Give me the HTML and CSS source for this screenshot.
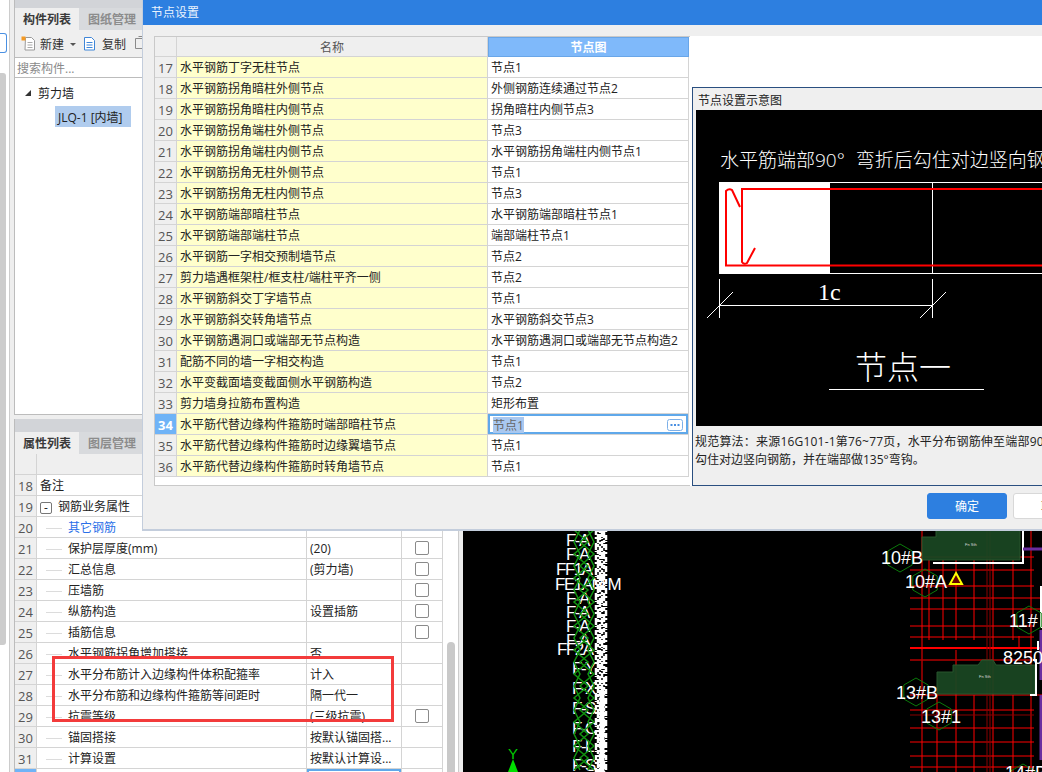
FILE: index.html
```html
<!DOCTYPE html>
<html lang="zh-CN">
<head>
<meta charset="utf-8">
<title>节点设置</title>
<link rel="stylesheet" href="styles.css">
</head>
<body>
<div class="app">
  <aside class="rail">
    <div class="rail-in">
      <div class="rail-tile"></div>
      <div class="rail-thumb"></div>
    </div>
  </aside>

  <div class="panels">
    <section class="panel panel-top">
      <div class="panel-head"></div>
      <div class="tabs">
        <span class="tab tab-on">构件列表</span>
        <span class="tab">图纸管理</span>
      </div>
      <div class="toolbar">
        <svg class="tool-ico" width="15" height="15" viewBox="0 0 15 15"><path d="M4.500 1.500h6l3 3v9.500h-9.500z" fill="#fff" stroke="#9a9a9a"/><path d="M6.500 6.500h5M6.500 9h5M6.500 11.500h5" stroke="#aaa"/><rect x="0.500" y="0.500" width="4" height="4" fill="#f59a23"/></svg>
        <span class="tool-label">新建</span>
        <span class="caret"></span>
        <svg class="tool-ico copy-ico" width="13" height="15" viewBox="0 0 13 15"><path d="M1.500 1.500h7l3 3v9.500h-10z" fill="#fff" stroke="#3f86d8"/><path d="M3.500 6.500h6M3.500 9h6M3.500 11.500h6" stroke="#3f86d8"/></svg>
        <span class="tool-label">复制</span>
        <svg class="tool-ico next-ico" width="12" height="15" viewBox="0 0 12 15"><path d="M0.500 2.500h9v10h-9z" fill="none" stroke="#8a8a8a"/><path d="M3.500 0.500h8v11" fill="none" stroke="#8a8a8a"/></svg>
      </div>
      <div class="search">搜索构件...</div>
      <div class="tree">
        <div class="tree-root"><span class="tree-tri"></span><span class="tree-name">剪力墙</span></div>
        <div class="tree-leaf">JLQ-1 [内墙]</div>
      </div>
    </section>

    <section class="panel panel-bottom">
      <div class="panel-head"></div>
      <div class="tabs">
        <span class="tab tab-on">属性列表</span>
        <span class="tab">图层管理</span>
      </div>
      <div class="prop-body">
        <table class="prop">
          <colgroup><col class="pc-no"><col class="pc-name"><col class="pc-val"><col class="pc-chk"></colgroup>
          <tr class="prop-head"><th></th><th></th><th></th><th></th></tr>
          <tr><th>18</th><td>备注</td><td></td><td></td></tr>
          <tr><th>19</th><td><span class="minus">-</span>钢筋业务属性</td><td></td><td></td></tr>
          <tr><th>20</th><td class="leaf link">其它钢筋</td><td></td><td></td></tr>
          <tr><th>21</th><td class="leaf">保护层厚度(mm)</td><td>(20)</td><td><span class="chk"></span></td></tr>
          <tr><th>22</th><td class="leaf">汇总信息</td><td>(剪力墙)</td><td><span class="chk"></span></td></tr>
          <tr><th>23</th><td class="leaf">压墙筋</td><td></td><td><span class="chk"></span></td></tr>
          <tr><th>24</th><td class="leaf">纵筋构造</td><td>设置插筋</td><td><span class="chk"></span></td></tr>
          <tr><th>25</th><td class="leaf">插筋信息</td><td></td><td><span class="chk"></span></td></tr>
          <tr><th>26</th><td class="leaf">水平钢筋拐角增加搭接</td><td>否</td><td></td></tr>
          <tr><th>27</th><td class="leaf">水平分布筋计入边缘构件体积配箍率</td><td>计入</td><td></td></tr>
          <tr><th>28</th><td class="leaf">水平分布筋和边缘构件箍筋等间距时</td><td>隔一代一</td><td></td></tr>
          <tr><th>29</th><td class="leaf">抗震等级</td><td>(三级抗震)</td><td><span class="chk"></span></td></tr>
          <tr><th>30</th><td class="leaf">锚固搭接</td><td>按默认锚固搭...</td><td></td></tr>
          <tr><th>31</th><td class="leaf">计算设置</td><td>按默认计算设...</td><td></td></tr>
          <tr class="row-cur"><th></th><td></td><td></td><td></td></tr>
        </table>
        <div class="lane"><div class="lane-thumb"></div></div>
      </div>
    </section>
  </div>

  <main class="cad">
    <svg class="cad-svg" width="579" height="772" viewBox="463 0 579 772">
      <defs>
        <polygon id="hex" points="0,-14 12.200,-7 12.200,7 0,14 -12.200,7 -12.200,-7" fill="none" stroke="#0b7a0b"/>
      </defs>

      <g class="noise">
        <line x1="596" y1="530" x2="596" y2="772" stroke-dasharray="5 2 2 4 7 1 1 3"/>
        <line x1="598" y1="530" x2="598" y2="772" stroke-dasharray="2 2 9 1 3 3 4 1"/>
        <line x1="600" y1="530" x2="600" y2="772" stroke-dasharray="3 1 6 2 2 2 9 1"/>
        <line x1="602" y1="530" x2="602" y2="772" stroke-dasharray="7 1 1 2 5 2 3 1"/>
        <line x1="604" y1="530" x2="604" y2="772" stroke-dasharray="8 2 3 1 4 3"/>
        <line x1="606" y1="530" x2="606" y2="772" stroke-dasharray="2 3 5 1 1 2 6 2"/>
        <line x1="602" y1="690" x2="602" y2="772" class="solid"/>
      </g>

      <g class="cad-label">
        <text x="566" y="546">F-A</text>
        <text x="566" y="560">F-A</text>
        <text x="556" y="575">FF1A</text>
        <text x="555" y="590">FE1AM M</text>
        <text x="566" y="604">F-A</text>
        <text x="566" y="618">F-A</text>
        <text x="566" y="632">F-A</text>
        <text x="566" y="646">F-A</text>
        <text x="557" y="655">FF2A</text>
        <text x="572" y="674">F-Y</text>
        <text x="572" y="694">F-X</text>
        <text x="572" y="714">F-S</text>
        <text x="572" y="734">F-C</text>
        <text x="572" y="752">F-L</text>
        <text x="572" y="771">F-S</text>
      </g>

      <g class="chain">
        <polyline points="580,530 574,542 580,554 574,566 580,578 574,590 580,602 574,614 580,626 574,638 580,650 574,662 580,674 574,686 580,698 574,710 580,722 574,734 580,746 574,758 580,770"/>
        <polyline points="588,530 594,542 588,554 594,566 588,578 594,590 588,602 594,614 588,626 594,638 588,650 594,662 588,674 594,686 588,698 594,710 588,722 594,734 588,746 594,758 588,770"/>
        <polyline points="574,530 588,542 574,554 588,566 574,578 588,590 574,602 588,614 574,626 588,638 574,650 588,662 574,674 588,686 574,698 588,710 574,722 588,734 574,746 588,758 574,770"/>
        <polyline points="594,530 580,542 594,554 580,566 594,578 580,590 594,602 580,614 594,626 580,638 594,650 580,662 594,674 580,686 594,698 580,710 594,722 580,734 594,746 580,758 594,770"/>
      </g>

      <g class="red">
        <path d="M910 557H1034M910 570H1034M910 586H1034M910 598H1042M910 609H1042M910 626H1034M910 637H1034M910 660H1034M910 695H1042M910 710H1034M910 728H1034M910 742H1034M910 756H1034M910 767H1034"/>
        <path d="M922 530V772M929 560V640M943 560V640M956 560V640M956 650V772M974 560V640M993 560V772M1013 560V640M1019 636V648M937 695V772M1031 530V772M974 695V772M1013 695V772"/>
        <path class="red-thick" d="M910 648H1042"/>
        <path class="red-dark" d="M910 660H1034M910 715H1034M987 530V772M990 530V772"/>
      </g>

      <path class="block" d="M922 537H936V530H1020V560H922Z"/>
      <path class="block" d="M937 672H953V665H975L978 665L982 660H993L996 665H1035V694H937Z"/>
      <path class="white-line" d="M933 563H1023V530M1033 660H1036V695H1030"/>
      <path class="purple" d="M1023 549H1042M1041 630V680M1041 695V760"/>
      <path class="white-line" d="M1041 586V628M1038 641V650"/>
      <text class="tiny" x="965" y="546">Fn Sth</text>
      <text class="tiny" x="979" y="678">Fn Sth</text>

      <use href="#hex" x="900" y="558"/>
      <use href="#hex" x="925" y="583"/>
      <use href="#hex" x="1029" y="620"/>
      <use href="#hex" x="916" y="692"/>
      <use href="#hex" x="939" y="716"/>
      <use href="#hex" x="1023" y="778"/>

      <g class="cad-num">
        <text x="881" y="564">10#B</text>
        <text x="905" y="588">10#A</text>
        <text x="1009" y="627">11#</text>
        <text x="1003" y="664">8250</text>
        <text x="896" y="699">13#B</text>
        <text x="921" y="723">13#1</text>
        <text x="1005" y="779">14#B</text>
      </g>
      <polygon class="warn" points="956,573 962,584 950,584"/>

      <text class="axis-y" x="508" y="759">Y</text>
      <polygon class="axis-arrow" points="513,759 518,772 508,772"/>
    </svg>
  </main>

  <div class="flag"></div>

  <div class="modal">
    <header class="modal-title">节点设置</header>
    <div class="modal-main">
      <div class="node-wrap">
        <table class="node">
          <colgroup><col class="nc-no"><col class="nc-name"><col class="nc-val"></colgroup>
          <tr class="node-head"><th></th><th class="nh-name">名称</th><th class="nh-val">节点图</th></tr>
          <tr><th>17</th><td class="nm">水平钢筋丁字无柱节点</td><td>节点1</td></tr>
          <tr><th>18</th><td class="nm">水平钢筋拐角暗柱外侧节点</td><td>外侧钢筋连续通过节点2</td></tr>
          <tr><th>19</th><td class="nm">水平钢筋拐角暗柱内侧节点</td><td>拐角暗柱内侧节点3</td></tr>
          <tr><th>20</th><td class="nm">水平钢筋拐角端柱外侧节点</td><td>节点3</td></tr>
          <tr><th>21</th><td class="nm">水平钢筋拐角端柱内侧节点</td><td>水平钢筋拐角端柱内侧节点1</td></tr>
          <tr><th>22</th><td class="nm">水平钢筋拐角无柱外侧节点</td><td>节点1</td></tr>
          <tr><th>23</th><td class="nm">水平钢筋拐角无柱内侧节点</td><td>节点3</td></tr>
          <tr><th>24</th><td class="nm">水平钢筋端部暗柱节点</td><td>水平钢筋端部暗柱节点1</td></tr>
          <tr><th>25</th><td class="nm">水平钢筋端部端柱节点</td><td>端部端柱节点1</td></tr>
          <tr><th>26</th><td class="nm">水平钢筋一字相交预制墙节点</td><td>节点2</td></tr>
          <tr><th>27</th><td class="nm">剪力墙遇框架柱/框支柱/端柱平齐一侧</td><td>节点2</td></tr>
          <tr><th>28</th><td class="nm">水平钢筋斜交丁字墙节点</td><td>节点1</td></tr>
          <tr><th>29</th><td class="nm">水平钢筋斜交转角墙节点</td><td>水平钢筋斜交节点3</td></tr>
          <tr><th>30</th><td class="nm">水平钢筋遇洞口或端部无节点构造</td><td>水平钢筋遇洞口或端部无节点构造2</td></tr>
          <tr><th>31</th><td class="nm">配筋不同的墙一字相交构造</td><td>节点1</td></tr>
          <tr><th>32</th><td class="nm">水平变截面墙变截面侧水平钢筋构造</td><td>节点2</td></tr>
          <tr><th>33</th><td class="nm">剪力墙身拉筋布置构造</td><td>矩形布置</td></tr>
          <tr class="node-cur"><th>34</th><td class="nm">水平筋代替边缘构件箍筋时端部暗柱节点</td><td class="cur-cell"><span class="cur-text">节点1</span><svg class="more" width="16" height="12" viewBox="0 0 16 12"><rect x="0.500" y="0.500" width="15" height="11" rx="2" fill="#fff" stroke="#7db0e8"/><path d="M3.500 6h2M7 6h2M10.500 6h2" stroke="#4a90e2" stroke-width="2"/></svg></td></tr>
          <tr><th>35</th><td class="nm">水平筋代替边缘构件箍筋时边缘翼墙节点</td><td>节点1</td></tr>
          <tr><th>36</th><td class="nm">水平筋代替边缘构件箍筋时转角墙节点</td><td>节点1</td></tr>
        </table>
      </div>
      <div class="side">
        <div class="group">
          <div class="group-title">节点设置示意图</div>
          <svg class="figure" width="346" height="316" viewBox="696 110 346 316">
            <rect x="696" y="110" width="346" height="316" fill="#000"/>
            <text class="fig-cap" x="720" y="167">水平筋端部90°<tspan dx="11">弯折后勾住对边竖向钢筋</tspan></text>
            <rect x="719" y="182" width="111" height="92" fill="#fff"/>
            <path class="fig-white" d="M830 182.500H1042M830 273.500H1042M932.500 182V273M719.500 279V318M932.500 279V318M719 305.500H932M707 318L733 292M920 318L946 292M829 389.500H984"/>
            <path class="fig-red" d="M1042 189H742V262Q744 265 747 263L755 248"/>
            <path class="fig-red" d="M1042 265.500H726V191Q729 188 732 190L740 207"/>
            <text class="fig-lc" x="818" y="300">1c</text>
            <text class="fig-title" x="855" y="379">节点一</text>
          </svg>
          <p class="desc">规范算法：来源16G101-1第76~77页，水平分布钢筋伸至端部90°弯折后</p>
          <p class="desc">勾住对边竖向钢筋，并在端部做135°弯钩。</p>
        </div>
      </div>
    </div>
    <footer class="modal-foot">
      <button class="btn btn-main">确定</button>
      <button class="btn">取消</button>
    </footer>
  </div>
</div>
</body>
</html>
```
FILE: styles.css
```css
* { box-sizing: border-box; }
html, body { margin: 0; padding: 0; }
body {
  width: 1042px;
  height: 772px;
  overflow: hidden;
  font-family: "Open Sans", "Noto Sans CJK SC", "Liberation Sans", sans-serif;
  font-size: 12px;
  line-height: 20px;
  color: #222;
}
.app {
  position: relative;
  display: flex;
  width: 1042px;
  height: 772px;
  overflow: hidden;
  background: #eee;
}

/* left rail */
.rail { width: 14px; flex: none; }
.rail-in {
  width: 10px;
  height: 100%;
  padding-top: 33px;
  background: #fff;
  border-right: 1px solid #ccc;
}
.rail-tile {
  width: 7px;
  height: 20px;
  background: #fff;
  border: 1px solid #4a90e2;
  border-left: 0;
  border-radius: 0 3px 3px 0;
}
.rail-thumb {
  width: 6px;
  height: 572px;
  margin-top: 20px;
  background: #ccc;
  border-radius: 0 3px 3px 0;
}

/* panels */
.panels {
  width: 449px;
  flex: none;
  display: flex;
  flex-direction: column;
  gap: 4px;
}
.panel { background: #fff; border-left: 1px solid #bcbcbc; }
.panel-top { height: 415px; border-bottom: 1px solid #bcbcbc; }
.panel-bottom { flex: 1; margin-right: 4px; min-height: 0; background: #eee; }
.panel-head { height: 8px; background: #d2d4d8; }
.panel-bottom .panel-head { height: 13px; }
.tabs { display: flex; height: 22px; background: #d8dadd; }
.tab {
  width: 64px;
  height: 22px;
  padding-left: 8px;
  line-height: 23px;
  font-weight: 700;
  color: #8c8c8c;
  white-space: nowrap;
}
.tab + .tab { padding-left: 9px; }
.tab-on { background: #efefef; color: #3a3a3a; }

.toolbar {
  display: flex;
  align-items: center;
  height: 28px;
  padding-left: 6px;
  background: #efefef;
  border-bottom: 1px solid #bcbcbc;
}
.tool-ico { flex: none; }
.tool-label { margin-left: 4px; padding-top: 2px; white-space: nowrap; color: #333; }
.caret {
  width: 0;
  height: 0;
  margin: 1px 6px 0 6px;
  border: 3px solid transparent;
  border-top: 3px solid #555;
  border-bottom: 0;
}
.copy-ico { margin-left: 1px; }
.copy-ico + .tool-label { margin-left: 6px; }
.next-ico { margin-left: 9px; }
.search {
  height: 20px;
  padding-left: 2px;
  line-height: 21px;
  color: #8a8a8a;
  background: #fff;
  border-bottom: 1px solid #bcbcbc;
  white-space: nowrap;
}
.tree { padding-top: 5px; }
.tree-root { display: flex; align-items: center; height: 20px; padding-left: 10px; }
.tree-name { padding-top: 2px; }
.tree-tri {
  width: 0;
  height: 0;
  margin-right: 7px;
  border-left: 6px solid transparent;
  border-bottom: 6px solid #333;
}
.tree-leaf {
  width: 76px;
  height: 21px;
  margin: 3px 0 0 40px;
  padding-left: 3px;
  line-height: 23px;
  background: #b0ccee;
  white-space: nowrap;
}

/* property grid */
.prop-body { display: flex; background: #fff; }
table { border-collapse: separate; border-spacing: 0; table-layout: fixed; }
.prop { width: 428px; flex: none; }
.pc-no { width: 22px; }
.pc-name { width: 270px; }
.pc-val { width: 95px; }
.pc-chk { width: 41px; }
.prop th, .prop td, .node th, .node td {
  height: 21px;
  padding: 2px 0 0 3px;
  line-height: 18px;
  font-weight: 400;
  text-align: left;
  white-space: nowrap;
  overflow: hidden;
  border-right: 1px solid #d4d4d4;
  border-bottom: 1px solid #d4d4d4;
  background: #fff;
}
.prop th, .node th {
  padding: 2px 0 0;
  text-align: center;
  font-size: 13px;
  color: #555;
  background: #efefef;
}
.prop-head th { background: #efefef; }
.prop td:last-child { padding: 0; text-align: center; }
.prop .leaf { padding-left: 9px; }
.prop .leaf::before {
  content: "";
  display: inline-block;
  width: 16px;
  height: 1px;
  margin-right: 6px;
  vertical-align: middle;
  background: #dcdcdc;
}
.link { color: #2a6fe8; }
.minus {
  display: inline-block;
  width: 12px;
  height: 12px;
  margin-right: 6px;
  line-height: 9px;
  text-align: center;
  vertical-align: -1px;
  border: 1px solid #777;
  border-radius: 2px;
}
.chk {
  display: block;
  width: 14px;
  height: 14px;
  margin: 0 auto;
  border: 1px solid #8a8a8a;
  border-radius: 2px;
  background: #fff;
}
.row-cur th { background: #6fb3f7; }
.row-cur td:nth-child(3) { box-shadow: inset 0 2px 0 #5fa8ea, inset 2px 0 0 #5fa8ea, inset -2px 0 0 #5fa8ea; }
.lane {
  width: 16px;
  flex: none;
  height: 320px;
  padding: 188px 0 0 4px;
  border-right: 1px solid #ccc;
}
.lane-thumb { width: 8px; height: 132px; background: #c9c9c9; border-radius: 4px 4px 0 0; }

/* CAD canvas */
.cad { flex: 1; background: #000; }
.cad-svg { display: block; }
.noise line { stroke: #fff; stroke-width: 2.500; }
.noise .solid { stroke-width: 5; }
.cad-label text {
  font-family: "Liberation Sans", sans-serif;
  font-size: 17px;
  letter-spacing: -1.500px;
  fill: #fff;
}
.chain polyline { fill: none; stroke: #109410; stroke-width: 1.500; }
.red path { fill: none; stroke: #f00; stroke-width: 1; }
.red .red-thick { stroke-width: 2; }
.red .red-dark { stroke: #8a0000; stroke-width: 1; }
.block { fill: #1a4723; stroke: #2a5a30; opacity: .94; }
.white-line { fill: none; stroke: #fff; stroke-width: 2; }
.purple { fill: none; stroke: #6a2ea0; stroke-width: 3; }
.tiny { font-family: "Liberation Sans", sans-serif; font-size: 4px; fill: #ddd; }
.cad-num text {
  font-family: "Liberation Sans", sans-serif;
  font-size: 18px;
  fill: #fff;
}
.warn { fill: #600; stroke: #ff0; stroke-width: 2; }
.axis-y { font-family: "Liberation Sans", sans-serif; font-size: 15px; fill: #0c0; }
.axis-arrow { fill: #00e000; }

/* red annotation rectangle */
.flag {
  position: absolute;
  left: 52px;
  top: 656px;
  width: 342px;
  height: 66px;
  border: 3px solid #f33b3b;
}

/* modal */
.modal {
  position: absolute;
  left: 142px;
  top: 0;
  width: 960px;
  height: 531px;
  display: flex;
  flex-direction: column;
  background: #efefef;
  border-left: 1px solid #c3cddc;
  border-bottom: 2px solid #c3cddc;
}
.modal-title {
  height: 25px;
  padding-left: 8px;
  line-height: 26px;
  color: #eaf3fd;
  background: #2d7fe0;
}
.modal-main { display: flex; height: 461px; padding: 11px 0 0 11px; }
.node-wrap {
  width: 536px;
  height: 450px;
  flex: none;
  background: #fff;
  border-top: 1px solid #c9c9c9;
  border-left: 1px solid #c9c9c9;
  border-bottom: 1px solid #c9c9c9;
}
.node { width: 534px; }
.nc-no { width: 22px; }
.nc-name { width: 311px; }
.nc-val { width: 201px; }
.node-head th { height: 20px; padding-top: 2px; line-height: 17px; }
.node .nh-name { font-size: 12px; }
.node .nh-val {
  padding-top: 1px;
  font-size: 12px;
  font-weight: 700;
  color: #fff;
  background: #7fb9fa;
  border: 1px solid #69a6e8;
}
.node .nm { background: #ffffcc; }
.node-cur th { background: #6fb3f7; color: #fff; font-weight: 700; }
.node .cur-cell {
  position: relative;
  padding: 0 0 0 5px;
  box-shadow: inset 0 0 0 2px #5fa8ea;
}
.cur-text { display: inline-block; height: 16px; line-height: 18px; color: #666; background: #a9c8f0; vertical-align: middle; }
.more { position: absolute; right: 5px; top: 5px; display: block; }
.side { flex: 1; height: 450px; padding: 51px 0 0 2px; background: #fff; overflow: hidden; }
.group {
  width: 380px;
  height: 399px;
  background: #efefef;
  border: 1px solid #2a4f80;
  border-right: 0;
}
.group-title { height: 22px; padding-left: 5px; line-height: 25px; white-space: nowrap; }
.figure { display: block; margin-left: 3px; }
.fig-cap { font-size: 19px; font-weight: 300; fill: #fff; }
.fig-white { fill: none; stroke: #fff; stroke-width: 1; }
.fig-red { fill: none; stroke: #f00; stroke-width: 2; }
.fig-lc { font-family: "Liberation Serif", serif; font-size: 24px; fill: #fff; }
.fig-title { font-size: 32px; font-weight: 300; fill: #fff; }
.desc { margin: 0 0 0 2px; height: 18px; line-height: 18px; white-space: nowrap; }
.figure + .desc { margin-top: 7px; letter-spacing: .2px; }

.modal-foot {
  display: flex;
  justify-content: flex-end;
  gap: 6px;
  padding: 7px 9px 0 0;
}
.btn {
  width: 80px;
  height: 26px;
  padding: 2px 0 0;
  font: inherit;
  color: #333;
  background: #fff;
  border: 1px solid #d8d8d8;
  border-radius: 3px;
}
.btn-main { color: #fff; background: #2d7fe0; border-color: #2d7fe0; }
```
